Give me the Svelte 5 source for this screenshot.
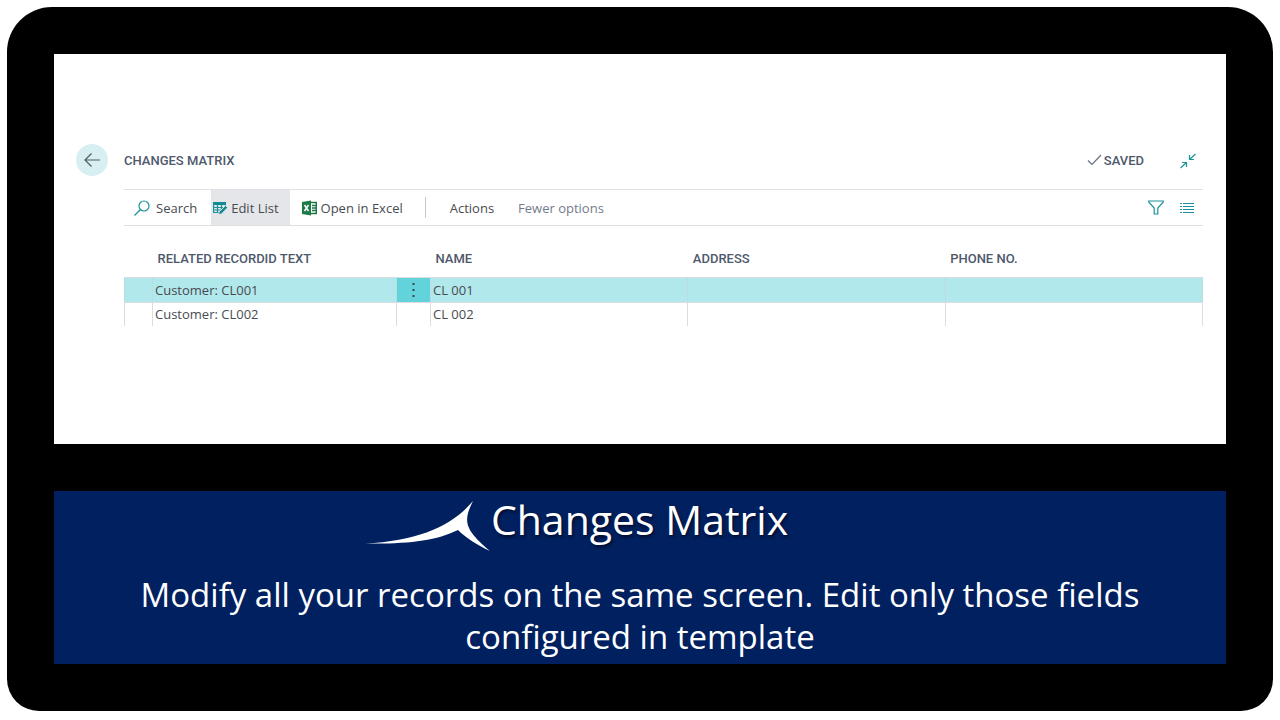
<script>
let records = [
    { id: "Customer: CL001", name: "CL 001", address: "", phone: "" },
    { id: "Customer: CL002", name: "CL 002", address: "", phone: "" },
];
let selected = 0;
let editing = true;
</script>

<main class="frame">
    <section class="screen">
        <header>
            <button class="back" aria-label="Back">
                <svg width="16" height="14" viewBox="0 0 16 14"><path d="M7.5 .5 1 7l6.500 6.500M1 7h15" /></svg>
            </button>
            <h1>CHANGES MATRIX</h1>
            <div class="saved">
                <svg width="15" height="12" viewBox="0 0 15 12"><path d="M1 6.500 5 10.500 14 1" /></svg>
                <span>SAVED</span>
            </div>
            <button class="collapse" aria-label="Collapse">
                <svg width="16" height="16" viewBox="0 0 16 16"><path d="M15.500 1 9.500 6.500M9.500 2v4.500H14M.5 15 6.500 9.500M2 9.500h4.500V14" /></svg>
            </button>
        </header>

        <div class="content">
            <nav class="toolbar">
                <button class="search">
                    <svg width="16" height="16" viewBox="0 0 16 16"><circle cx="10" cy="6" r="5" /><path d="M6.500 9.500.5 15.500" /></svg>
                    Search
                </button>
                <button class="edit" class:active={editing} on:click={() => (editing = !editing)}>
                    <svg width="15" height="14" viewBox="0 0 15 14">
                        <path class="fill" d="M0 1h13v3H0z" />
                        <path d="M.6 1.500v10H7M.5 6.500H11M.5 9H8M4.500 4v7.500M8.500 4v5M12.400 4v2" />
                        <path class="pencil" d="m12.500 4.500 2.200 2.200-6.200 6.200-3.200.9.900-3.100z" />
                    </svg>
                    Edit List
                </button>
                <button class="excel">
                    <svg width="15" height="16" viewBox="0 0 15 16">
                        <path class="book" d="M0 2 9 .5v15L0 14z" />
                        <path class="cross" d="m2.500 5 4 6M6.500 5l-4 6" />
                        <path class="sheet" d="M9 2.500h5.300v11H9M10 5.500h4M10 8h4M10 10.500h4" />
                    </svg>
                    Open in Excel
                </button>
                <span class="divider"></span>
                <button class="actions">Actions</button>
                <button class="fewer">Fewer options</button>
                <button class="filter" aria-label="Filter">
                    <svg width="16" height="15" viewBox="0 0 16 15"><path d="M.7 1h14.600v1L9.800 8v6H6.200V8L.7 2z" /></svg>
                </button>
                <button aria-label="List view">
                    <svg width="14" height="12" viewBox="0 0 14 12"><path d="M0 1.500h2M3 1.500h11M0 4.500h2M3 4.500h11M0 7.500h2M3 7.500h11M0 10.500h2M3 10.500h11" /></svg>
                </button>
            </nav>

            <table>
                <colgroup>
                    <col class="mark" /><col class="record" /><col class="menu" /><col /><col /><col />
                </colgroup>
                <thead>
                    <tr>
                        <td></td>
                        <th>RELATED RECORDID TEXT</th>
                        <td></td>
                        <th>NAME</th>
                        <th>ADDRESS</th>
                        <th>PHONE NO.</th>
                    </tr>
                </thead>
                <tbody>
                    {#each records as record, i}
                        <tr class:selected={i === selected} on:click={() => (selected = i)}>
                            <td></td>
                            <td>{record.id}</td>
                            <td class="more">
                                {#if i === selected}
                                    <button aria-label="More options">
                                        <svg width="3" height="14" viewBox="0 0 3 14"><path d="M.5 0h2v2h-2zM.5 6h2v2h-2zM.5 12h2v2h-2z" /></svg>
                                    </button>
                                {/if}
                            </td>
                            <td>{record.name}</td>
                            <td>{record.address}</td>
                            <td>{record.phone}</td>
                        </tr>
                    {/each}
                </tbody>
            </table>
        </div>
    </section>

    <section class="caption">
        <div class="brand">
            <svg width="126" height="50" viewBox="0 0 126 50"><path d="M0 42.500C55 40 88 24 108 0C98 20 99 28 125 50C112 44 101 37 93 29C70 40 45 43 0 42.500z" /></svg>
            <h2>Changes Matrix</h2>
        </div>
        <p>Modify all your records on the same screen. Edit only those fields configured in template</p>
    </section>
</main>

<style>
    :global(body) {
        background-color: white;
        font-family: "Open Sans", sans-serif;
    }

    .frame {
        display: flex;
        flex-direction: column;
        gap: 47px;
        margin: 7px 7px 9px;
        padding: 47px;
        background-color: black;
        border-radius: 45px 45px 32px 32px;
    }

    .screen {
        padding: 90px 23px 118px 22px;
        background-color: white;
        color: #484b50;
        font-size: 13px;
    }

    button {
        display: flex;
        align-items: center;
        padding: 0;
        border: none;
        background: none;
        color: inherit;
        font: inherit;
        white-space: nowrap;
        cursor: pointer;
    }

    svg {
        flex: none;
        fill: none;
        stroke: #1c929a;
        stroke-width: 1.2;
    }

    header {
        display: flex;
        align-items: center;
        color: #4e596b;
    }

    .back {
        justify-content: center;
        width: 32px;
        height: 32px;
        margin-right: 16px;
        border-radius: 50%;
        background-color: #d8eff2;
    }

    .back svg {
        stroke: #4c5c60;
    }

    h1, .saved, th {
        font-family: Roboto, sans-serif;
        font-size: 13px;
        font-weight: 500;
    }

    h1 {
        margin: 0;
    }

    .saved {
        display: flex;
        align-items: center;
        gap: 2px;
        margin-left: auto;
    }

    .saved svg {
        stroke: #667080;
    }

    .collapse {
        margin: 2px 7px 0 36px;
    }

    .content {
        margin: 13px 0 0 48px;
    }

    .toolbar {
        display: flex;
        align-items: center;
        height: 35px;
        border-top: 1px solid #dfe0e2;
        border-bottom: 1px solid #dfe0e2;
    }

    .search {
        gap: 6px;
        padding: 0 14px 0 10px;
    }

    .edit {
        gap: 3px;
        height: 35px;
        padding: 0 11px 0 2px;
    }

    .edit.active {
        background-color: #e5e6e9;
    }

    .excel {
        gap: 4px;
        padding-left: 12px;
    }

    .fill {
        fill: #128a93;
        stroke: none;
    }

    .pencil {
        fill: #128a93;
        stroke: #e5e6e9;
        stroke-width: 1;
    }

    .book {
        fill: #1d7a46;
        stroke: none;
    }

    .cross {
        stroke: white;
        stroke-width: 1.5;
    }

    .sheet {
        stroke: #1d7a46;
        stroke-width: 1.5;
    }

    .divider {
        width: 1px;
        height: 21px;
        margin: 0 24px 0 22px;
        background-color: #c5c8d0;
    }

    .actions {
        margin-right: 24px;
    }

    .fewer {
        color: #737b8b;
    }

    .filter {
        margin-left: auto;
    }

    .filter + button {
        margin: 0 9px 0 16px;
    }

    table {
        width: 100%;
        margin-top: 14px;
        table-layout: fixed;
        border-collapse: collapse;
    }

    .mark {
        width: 28px;
    }

    .record {
        width: 244px;
    }

    .menu {
        width: 34px;
    }

    th {
        height: 37px;
        padding: 0 5px;
        color: #4e596b;
        text-align: left;
    }

    td {
        padding: 0 2px;
    }

    tbody td {
        height: 24px;
        line-height: 24px;
        border: 1px solid #dcdde2;
    }

    tbody tr:last-child td {
        height: 23px;
        line-height: 23px;
        border-bottom: none;
    }

    .selected {
        background-color: #b1e8eb;
    }

    .selected td {
        border-left-color: #b9dde1;
        border-right-color: #b9dde1;
    }

    .selected .more {
        background-color: #62d3da;
    }

    .more button {
        justify-content: center;
        width: 100%;
        height: 24px;
    }

    .more svg {
        fill: #39474b;
        stroke: none;
    }

    .caption {
        padding: 7px 80px 6px;
        background-color: #00205f;
        color: white;
        text-align: center;
    }

    .brand {
        display: flex;
        align-items: flex-start;
        justify-content: center;
        margin-right: 127px;
    }

    .brand svg {
        margin-top: 3px;
        fill: white;
        stroke: none;
    }

    h2 {
        margin: 0;
        font-size: 41px;
        font-weight: 400;
        line-height: 42px;
        text-shadow: 1px 2px 3px #000b2d;
    }

    p {
        margin: 23px 0 0;
        font-size: 33px;
        line-height: 42px;
    }
</style>
